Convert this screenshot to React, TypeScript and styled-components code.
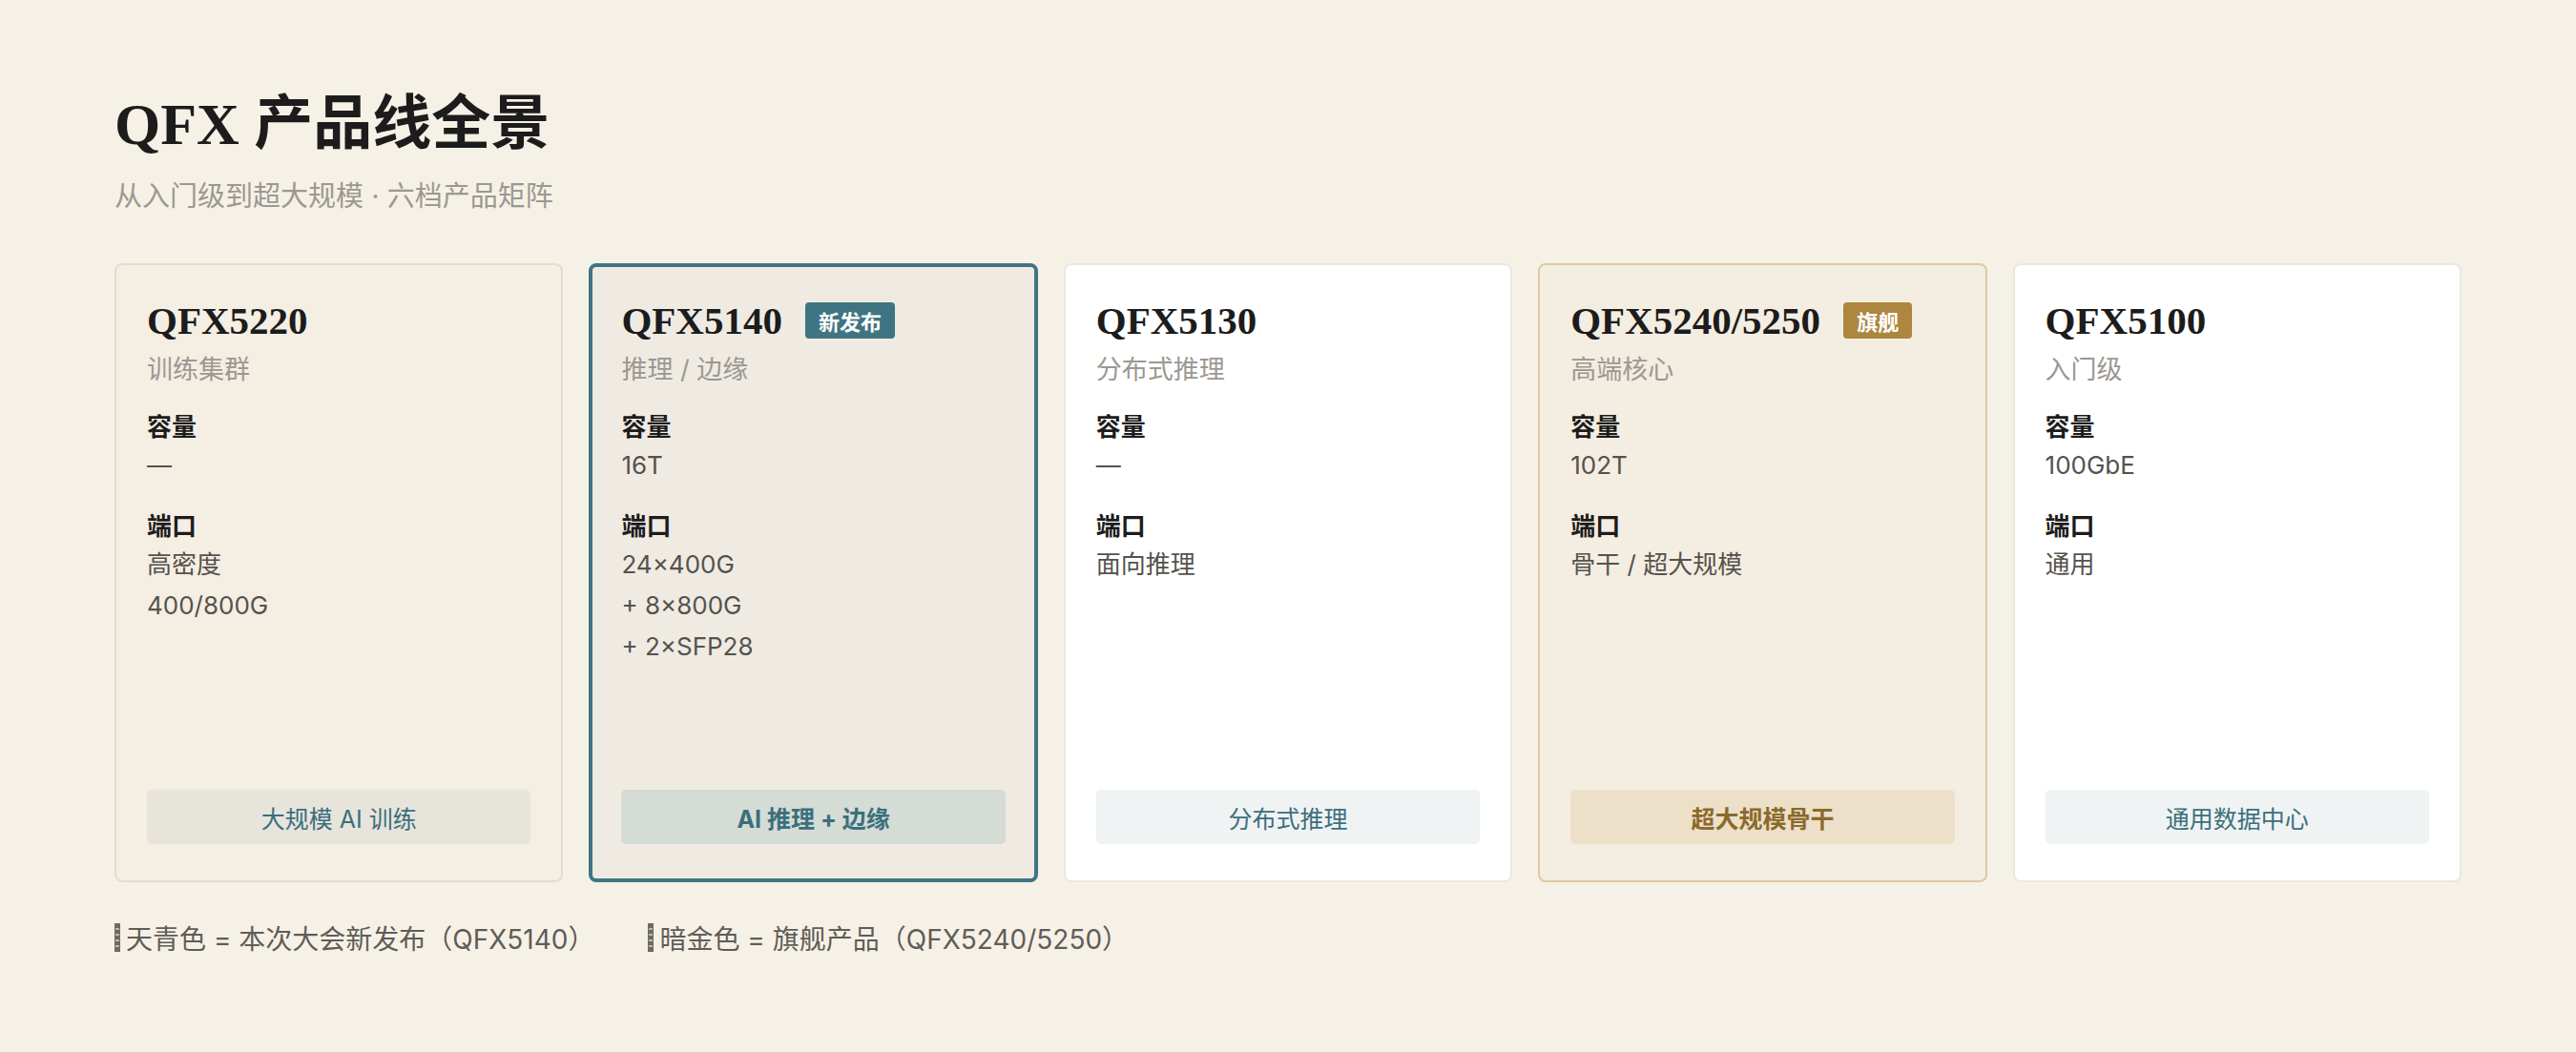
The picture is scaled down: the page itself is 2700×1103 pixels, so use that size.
import React from 'react';
import styled, { createGlobalStyle, css } from 'styled-components';

type Variant = 'plain' | 'warm' | 'new' | 'flagship';

const GlobalStyle = createGlobalStyle`
  html, body { margin: 0; background: #f6f1e6; }
  body { font-family: Inter, "Noto Sans CJK SC", sans-serif; color: #2a2a2a; }
`;

const Wrap = styled.div`
  padding: 90px 120px 60px;
`;

const Title = styled.h1`
  margin: 0;
  font-family: "Liberation Serif", "Noto Sans CJK SC", serif;
  font-weight: 700;
  font-size: 62px;
  line-height: 80px;
  color: #1c1c1c;
`;

const Subtitle = styled.div`
  margin-top: 12px;
  font-size: 29px;
  color: #9b9892;
`;

const Grid = styled.div`
  margin-top: 52px;
  display: grid;
  grid-template-columns: repeat(5, 1fr);
  gap: 27px;
`;

const variants = {
  plain: css`background: #fff; border: 2px solid #ebe8e2;`,
  warm: css`background: #f4eee3; border: 2px solid #e3ddd0;`,
  new: css`background: #efebe3; border: 4px solid #3f7582;`,
  flagship: css`background: #f4ede1; border: 2px solid #dccaa2;`,
};

const Card = styled.div<{ $v: Variant }>`
  ${(p) => variants[p.$v]}
  border-radius: 8px;
  height: 649px;
  box-sizing: border-box;
  padding: ${(p) => (p.$v === 'new' ? '28px 30px 36px' : '30px 32px 38px')};
  display: flex;
  flex-direction: column;
`;

const NameRow = styled.div`
  display: flex;
  align-items: center;
  gap: 24px;
`;

const Name = styled.div`
  font-family: "Liberation Serif", serif;
  font-weight: 700;
  font-size: 41px;
  line-height: 56px;
  color: #1c1c1c;
`;

const Badge = styled.span<{ $gold?: boolean }>`
  background: ${(p) => (p.$gold ? '#ad8640' : '#3f7582')};
  color: #fff;
  font-family: "Noto Sans CJK SC", serif;
  font-weight: 700;
  font-size: 22px;
  padding: 3px 14px;
  border-radius: 4px;
`;

const Role = styled.div`
  margin-top: 2px;
  font-size: 27px;
  color: #9b9892;
`;

const Label = styled.div`
  margin-top: 22px;
  font-size: 26px;
  font-weight: 700;
  color: #1c1c1c;
`;

const Value = styled.div`
  margin-top: 2px;
  font-size: 26px;
  line-height: 43px;
  color: #55524d;
`;

const Tag = styled.div<{ $v: Variant }>`
  margin-top: auto;
  height: 57px;
  border-radius: 5px;
  display: flex;
  align-items: center;
  justify-content: center;
  font-size: 25px;
  color: ${(p) => (p.$v === 'flagship' ? '#8a6a2c' : '#3b6f7c')};
  font-weight: ${(p) => (p.$v === 'new' || p.$v === 'flagship' ? 700 : 400)};
  background: ${(p) =>
    p.$v === 'flagship' ? '#ede0c8' : p.$v === 'new' ? '#d4dcd5' : p.$v === 'warm' ? '#e7e4dc' : '#eff3f3'};
`;

const Legend = styled.div`
  margin-top: 38px;
  display: flex;
  gap: 56px;
  font-size: 28px;
  color: #5f5c57;
`;

const LegendItem = styled.div`
  display: flex;
  align-items: center;
  gap: 6px;
`;

const Swatch = styled.span`
  width: 6px;
  height: 30px;
  background: repeating-linear-gradient(#6d6a64 0 4px, #bdb8ae 4px 6px);
  border: 1px solid #6d6a64;
  box-sizing: border-box;
`;

const cards: {
  name: string; role: string; cap: string; ports: string[]; tag: string; v: Variant; badge?: string;
}[] = [
  { name: 'QFX5220', role: '训练集群', cap: '—', ports: ['高密度', '400/800G'], tag: '大规模 AI 训练', v: 'warm' },
  { name: 'QFX5140', role: '推理 / 边缘', cap: '16T', ports: ['24×400G', '+ 8×800G', '+ 2×SFP28'], tag: 'AI 推理 + 边缘', v: 'new', badge: '新发布' },
  { name: 'QFX5130', role: '分布式推理', cap: '—', ports: ['面向推理'], tag: '分布式推理', v: 'plain' },
  { name: 'QFX5240/5250', role: '高端核心', cap: '102T', ports: ['骨干 / 超大规模'], tag: '超大规模骨干', v: 'flagship', badge: '旗舰' },
  { name: 'QFX5100', role: '入门级', cap: '100GbE', ports: ['通用'], tag: '通用数据中心', v: 'plain' },
];

export default function App() {
  return (
    <Wrap>
      <GlobalStyle />
      <Title>QFX 产品线全景</Title>
      <Subtitle>从入门级到超大规模 · 六档产品矩阵</Subtitle>
      <Grid>
        {cards.map((c) => (
          <Card key={c.name} $v={c.v}>
            <NameRow>
              <Name>{c.name}</Name>
              {c.badge && <Badge $gold={c.v === 'flagship'}>{c.badge}</Badge>}
            </NameRow>
            <Role>{c.role}</Role>
            <Label>容量</Label>
            <Value>{c.cap}</Value>
            <Label>端口</Label>
            <Value>
              {c.ports.map((p) => (
                <div key={p}>{p}</div>
              ))}
            </Value>
            <Tag $v={c.v}>{c.tag}</Tag>
          </Card>
        ))}
      </Grid>
      <Legend>
        <LegendItem><Swatch />天青色 = 本次大会新发布（QFX5140）</LegendItem>
        <LegendItem><Swatch />暗金色 = 旗舰产品（QFX5240/5250）</LegendItem>
      </Legend>
    </Wrap>
  );
}
